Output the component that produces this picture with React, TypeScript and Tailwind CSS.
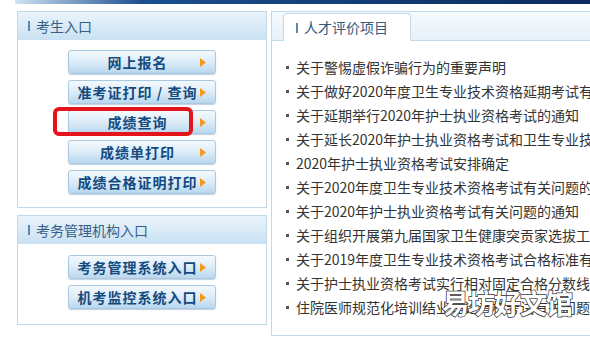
import React from 'react';

const cn = { fontFamily: '"Noto Sans CJK SC", "Noto Sans", sans-serif' };

const Arrow = () => (
  <svg width="6" height="9" viewBox="0 0 6 9" className="shrink-0">
    <path d="M0 0 L6 4.5 L0 9 Z" fill="#f39a1e" />
  </svg>
);

const EntryButton: React.FC<{ label: string }> = ({ label }) => (
  <div className="flex h-[24px] w-[148px] items-center rounded-[3px] border border-[#a9c9e2] bg-gradient-to-b from-[#f4f9fd] via-[#dcecf8] to-[#b9d7ee] pl-[6px] pr-[9px] shadow-[0_1px_1px_rgba(80,120,160,0.35)]">
    <span className="flex-1 text-center text-[14px] font-bold leading-none tracking-[1px] text-[#144a7e]">{label}</span>
    <Arrow />
  </div>
);

const PanelHeader: React.FC<{ title: string }> = ({ title }) => (
  <div className="flex h-[28px] items-center gap-[6px] bg-gradient-to-b from-[#eaf4fc] to-[#c9e1f3] pl-[10px]">
    <span className="h-[10px] w-[2px] bg-[#5b88ad]" />
    <span className="text-[14px] text-[#355f86]">{title}</span>
  </div>
);

const news = [
  '关于警惕虚假诈骗行为的重要声明',
  '关于做好2020年度卫生专业技术资格延期考试有关工作的通知',
  '关于延期举行2020年护士执业资格考试的通知',
  '关于延长2020年护士执业资格考试和卫生专业技术资格考试报名时间的通知',
  '2020年护士执业资格考试安排确定',
  '关于2020年度卫生专业技术资格考试有关问题的通知',
  '关于2020年护士执业资格考试有关问题的通知',
  '关于组织开展第九届国家卫生健康突贡家选拔工作的通知',
  '关于2019年度卫生专业技术资格考试合格标准有关问题的通知',
  '关于护士执业资格考试实行相对固定合格分数线的通知',
  '住院医师规范化培训结业理论考核考试有关问题的通知',
];

export default function App() {
  return (
    <div className="relative h-[340px] w-[590px] overflow-hidden bg-white" style={cn}>
      <div className="ml-[15px] h-[4px] bg-gradient-to-r from-[#cfe3f3] via-[#1b4f8f] via-[22%] to-[#0a2a5c]" />
      <div className="flex gap-[4px] pl-[17px] pt-[7px]">
        {/* left column */}
        <div className="flex w-[250px] shrink-0 flex-col gap-[7px]">
          <div className="h-[197px] border border-[#c3d9e8]">
            <PanelHeader title="考生入口" />
            <div className="flex flex-col items-center gap-[6px] pt-[10px]">
              <EntryButton label="网上报名" />
              <EntryButton label="准考证打印 / 查询" />
              <div className="relative">
                <EntryButton label="成绩查询" />
                <div className="absolute left-[-15px] top-[-3px] h-[29px] w-[140px] rounded-[6px] border-[4px] border-[#e5141b]" />
              </div>
              <EntryButton label="成绩单打印" />
              <EntryButton label="成绩合格证明打印" />
            </div>
          </div>
          <div className="h-[110px] border border-[#c3d9e8]">
            <PanelHeader title="考务管理机构入口" />
            <div className="flex flex-col items-center gap-[6px] pt-[11px]">
              <EntryButton label="考务管理系统入口" />
              <EntryButton label="机考监控系统入口" />
            </div>
          </div>
        </div>
        {/* right column */}
        <div className="h-[325px] min-w-0 flex-1 overflow-hidden border border-r-0 border-[#c3d9e8]">
          <div className="flex h-[29px] items-end border-b border-[#c3d9e8] bg-gradient-to-b from-[#f5fafd] to-[#e6f1fa] pl-[11px]">
            <div className="-mb-px flex h-[28px] w-[128px] items-center gap-[6px] rounded-t-[4px] border border-b-0 border-[#c3d9e8] bg-white pl-[12px]">
              <span className="h-[10px] w-[2px] bg-[#5b88ad]" />
              <span className="text-[14px] text-[#2f5a82]">人才评价项目</span>
            </div>
          </div>
          <ul className="flex flex-col pl-[14px] pt-[14px]">
            {news.map((t) => (
              <li key={t} className="flex h-[24px] items-center gap-[7px] whitespace-nowrap text-[14px] text-[#333]">
                <span className="h-[3px] w-[3px] shrink-0 bg-[#555]" />
                <span>{t}</span>
              </li>
            ))}
          </ul>
        </div>
      </div>
      <div className="absolute left-[442px] top-[289px] text-[27px] font-bold leading-none tracking-[-1px] text-white [-webkit-text-stroke:1.5px_#3a3a3a] [paint-order:stroke_fill]">
        易坊好文馆
      </div>
    </div>
  );
}
